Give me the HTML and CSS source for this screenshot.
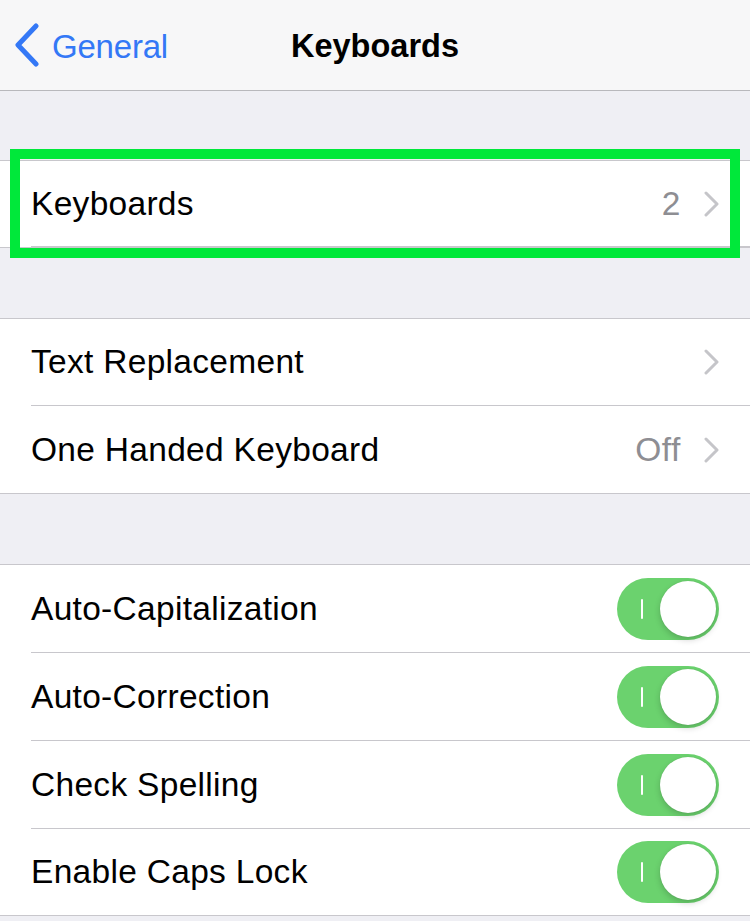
FILE: index.html
```html
<!DOCTYPE html>
<html>
<head>
<meta charset="utf-8">
<link rel="stylesheet" href="styles.css">
</head>
<body>
<div class="screen">
  <header class="nav">
    <div class="back">
      <svg class="back-chev" width="30" height="46" viewBox="0 0 30 46"><polyline points="21,3 3,22 21,41" fill="none" stroke="#3478f6" stroke-width="5" stroke-linecap="round" stroke-linejoin="round"/></svg>
      <span class="back-label">General</span>
    </div>
    <div class="title">Keyboards</div>
  </header>

  <section class="group group-first">
    <div class="row single">
      <div class="cell">
        <span class="label">Keyboards</span>
        <span class="detail">2</span>
        <svg class="chev" width="18" height="26" viewBox="0 0 18 26"><polyline points="3,2 14,13 3,24" fill="none" stroke="#c5c5c9" stroke-width="3" stroke-linecap="round" stroke-linejoin="round"/></svg>
      </div>
    </div>
    <div class="highlight"></div>
  </section>

  <section class="group">
    <div class="row">
      <div class="cell">
        <span class="label">Text Replacement</span>
        <svg class="chev" width="18" height="26" viewBox="0 0 18 26"><polyline points="3,2 14,13 3,24" fill="none" stroke="#c5c5c9" stroke-width="3" stroke-linecap="round" stroke-linejoin="round"/></svg>
      </div>
    </div>
    <div class="row">
      <div class="cell">
        <span class="label">One Handed Keyboard</span>
        <span class="detail">Off</span>
        <svg class="chev" width="18" height="26" viewBox="0 0 18 26"><polyline points="3,2 14,13 3,24" fill="none" stroke="#c5c5c9" stroke-width="3" stroke-linecap="round" stroke-linejoin="round"/></svg>
      </div>
    </div>
  </section>

  <section class="group group-toggles">
    <div class="row">
      <div class="cell">
        <span class="label">Auto-Capitalization</span>
        <span class="switch"><span class="mark"></span><span class="knob"></span></span>
      </div>
    </div>
    <div class="row">
      <div class="cell">
        <span class="label">Auto-Correction</span>
        <span class="switch"><span class="mark"></span><span class="knob"></span></span>
      </div>
    </div>
    <div class="row">
      <div class="cell">
        <span class="label">Check Spelling</span>
        <span class="switch"><span class="mark"></span><span class="knob"></span></span>
      </div>
    </div>
    <div class="row">
      <div class="cell">
        <span class="label">Enable Caps Lock</span>
        <span class="switch"><span class="mark"></span><span class="knob"></span></span>
      </div>
    </div>
  </section>
</div>
</body>
</html>
```

FILE: styles.css
```css
html, body {
  margin: 0;
  padding: 0;
  background: #efeff4;
}

.screen {
  width: 750px;
  height: 921px;
  overflow: hidden;
  background: #efeff4;
  font-family: "Liberation Sans", Arial, sans-serif;
  color: #000;
}

.nav {
  box-sizing: border-box;
  height: 91px;
  background: #f7f7f8;
  border-bottom: 1px solid #b8b8bc;
  display: grid;
  grid-template-columns: 1fr auto 1fr;
  align-items: center;
}

.back {
  grid-column: 1;
  grid-row: 1;
  display: flex;
  align-items: center;
  padding-left: 15px;
  padding-top: 2px;
}

.back-chev {
  display: block;
  margin-right: 7px;
}

.back-label {
  font-size: 33px;
  color: #3478f6;
  letter-spacing: -0.2px;
  padding-top: 2px;
}

.title {
  grid-column: 2;
  grid-row: 1;
  font-size: 32.5px;
  font-weight: bold;
  padding-top: 3px;
}

.group {
  position: relative;
  margin-top: 70px;
  background: #fff;
  border-top: 1px solid #c8c7cc;
  border-bottom: 1px solid #c8c7cc;
}

.group-first {
  margin-top: 69px;
}

.row {
  padding-left: 31px;
}

.cell {
  box-sizing: border-box;
  height: 87px;
  display: flex;
  align-items: center;
  padding-right: 31px;
  border-bottom: 1px solid #c8c7cc;
}

.row:last-child .cell {
  border-bottom: none;
  height: 87px;
}

.row.single .cell {
  height: 86px;
}

.group-toggles .cell {
  height: 88px;
}

.group-toggles .row:last-child .cell {
  height: 86px;
}

.label {
  flex: 1;
  font-size: 33.5px;
  letter-spacing: 0.3px;
}

.detail {
  font-size: 33.5px;
  color: #8e8e93;
  margin-right: 22px;
  letter-spacing: 0.6px;
}

.chev {
  display: block;
  margin-right: -2px;
}

.switch {
  position: relative;
  box-sizing: border-box;
  width: 102px;
  height: 62px;
  border-radius: 31px;
  background: #6bd26e;
  display: block;
}

.mark {
  position: absolute;
  left: 24px;
  top: 21px;
  width: 2px;
  height: 20px;
  background: #fff;
  border-radius: 1px;
}

.knob {
  position: absolute;
  right: 3px;
  top: 3px;
  width: 56px;
  height: 56px;
  border-radius: 50%;
  background: #fff;
  box-shadow: 0 3px 6px rgba(0, 0, 0, 0.18), 0 0 1px rgba(0, 0, 0, 0.15);
}

.highlight {
  position: absolute;
  left: 10px;
  top: -12px;
  width: 730px;
  height: 109px;
  box-sizing: border-box;
  border: 10px solid #00e83a;
  pointer-events: none;
}
```
